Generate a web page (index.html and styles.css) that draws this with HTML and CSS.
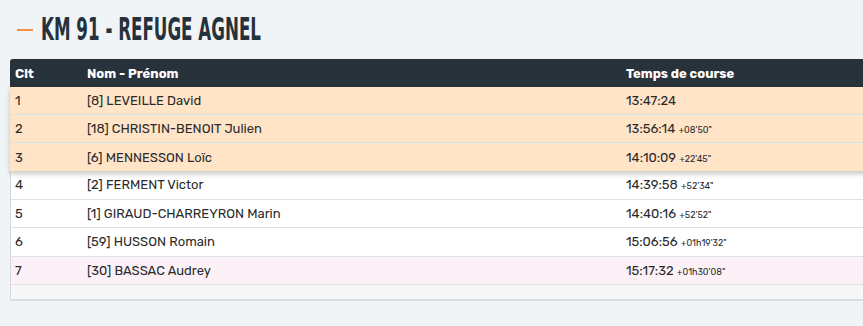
FILE: index.html
```html
<!DOCTYPE html>
<html lang="fr">
<head>
<meta charset="utf-8">
<link rel="stylesheet" href="styles.css">
</head>
<body>
<div class="page">
  <h2 class="title"><span class="dash"></span><span class="title-text">KM 91 - REFUGE AGNEL</span></h2>
  <div class="table">
    <div class="row head">
      <div class="c1">Clt</div><div class="c2">Nom - Prénom</div><div class="c3">Temps de course</div>
    </div>
    <div class="podium">
      <div class="row top"><div class="c1">1</div><div class="c2">[8] LEVEILLE David</div><div class="c3">13:47:24</div></div>
      <div class="row top"><div class="c1">2</div><div class="c2">[18] CHRISTIN-BENOIT Julien</div><div class="c3">13:56:14 <small>+08'50"</small></div></div>
      <div class="row top last"><div class="c1">3</div><div class="c2">[6] MENNESSON Loïc</div><div class="c3">14:10:09 <small>+22'45"</small></div></div>
    </div>
    <div class="row"><div class="c1">4</div><div class="c2">[2] FERMENT Victor</div><div class="c3">14:39:58 <small>+52'34"</small></div></div>
    <div class="row"><div class="c1">5</div><div class="c2">[1] GIRAUD-CHARREYRON Marin</div><div class="c3">14:40:16 <small>+52'52"</small></div></div>
    <div class="row"><div class="c1">6</div><div class="c2">[59] HUSSON Romain</div><div class="c3">15:06:56 <small>+01h19'32"</small></div></div>
    <div class="row woman"><div class="c1">7</div><div class="c2">[30] BASSAC Audrey</div><div class="c3">15:17:32 <small>+01h30'08"</small></div></div>
    <div class="foot"></div>
  </div>
</div>
</body>
</html>
```
FILE: styles.css
```css
html, body { margin: 0; padding: 0; }
body {
  background: #f1f4f6;
  font-family: "Rubik", "Inter", "Roboto", sans-serif;
  color: #2b2b2b;
  overflow: hidden;
}
.page { padding: 14px 0 0 10px; }
.title {
  margin: 0 0 14px 0;
  display: flex;
  align-items: center;
  height: 31px;
}
.dash {
  display: block;
  width: 16px;
  height: 2px;
  background: #ee9240;
  margin: 0 8px 0 7px;
}
.title-text {
  display: inline-block;
  font-family: "DejaVu Sans Condensed", "DejaVu Sans", sans-serif;
  font-stretch: condensed;
  font-weight: bold;
  font-size: 32px;
  line-height: 31px;
  color: #26323b;
  transform: scaleX(0.58);
  transform-origin: left center;
  white-space: nowrap;
  letter-spacing: 0;
}
.table {
  width: 870px;
  border-left: 1px solid #d6d9dc;
  border-radius: 3px 0 0 0;
  background: #fff;
  font-size: 13px;
}
.row {
  display: grid;
  grid-template-columns: 72px 539px 1fr;
  height: 28px;
  align-items: center;
  border-bottom: 1px solid #dfe2e5;
  box-sizing: border-box;
}
.row > div { padding-left: 4px; white-space: nowrap; }
.head {
  background: #27323b;
  color: #fff;
  font-weight: 700;
  border-bottom: none;
  border-radius: 3px 0 0 0;
  margin-left: -1px;
  padding-left: 1px;
}
.podium {
  position: relative;
  z-index: 1;
  box-shadow: 0 3px 5px rgba(0,0,0,0.22);
  margin-left: -1px;
  padding-left: 1px;
  background: #ffe4c8;
}
.top {
  background: #ffe4c8;
  border-bottom: 1px solid #d2e2ee;
}
.top.last { border-bottom: none; }
.row:not(.top):not(.head) { height: 28.5px; }
.woman { background: #fdf1f8; }
small { font-size: 9px; }
.foot {
  height: 14px;
  background: #f7f7f7;
  border-bottom: 2px solid #dadcde;
}
```
